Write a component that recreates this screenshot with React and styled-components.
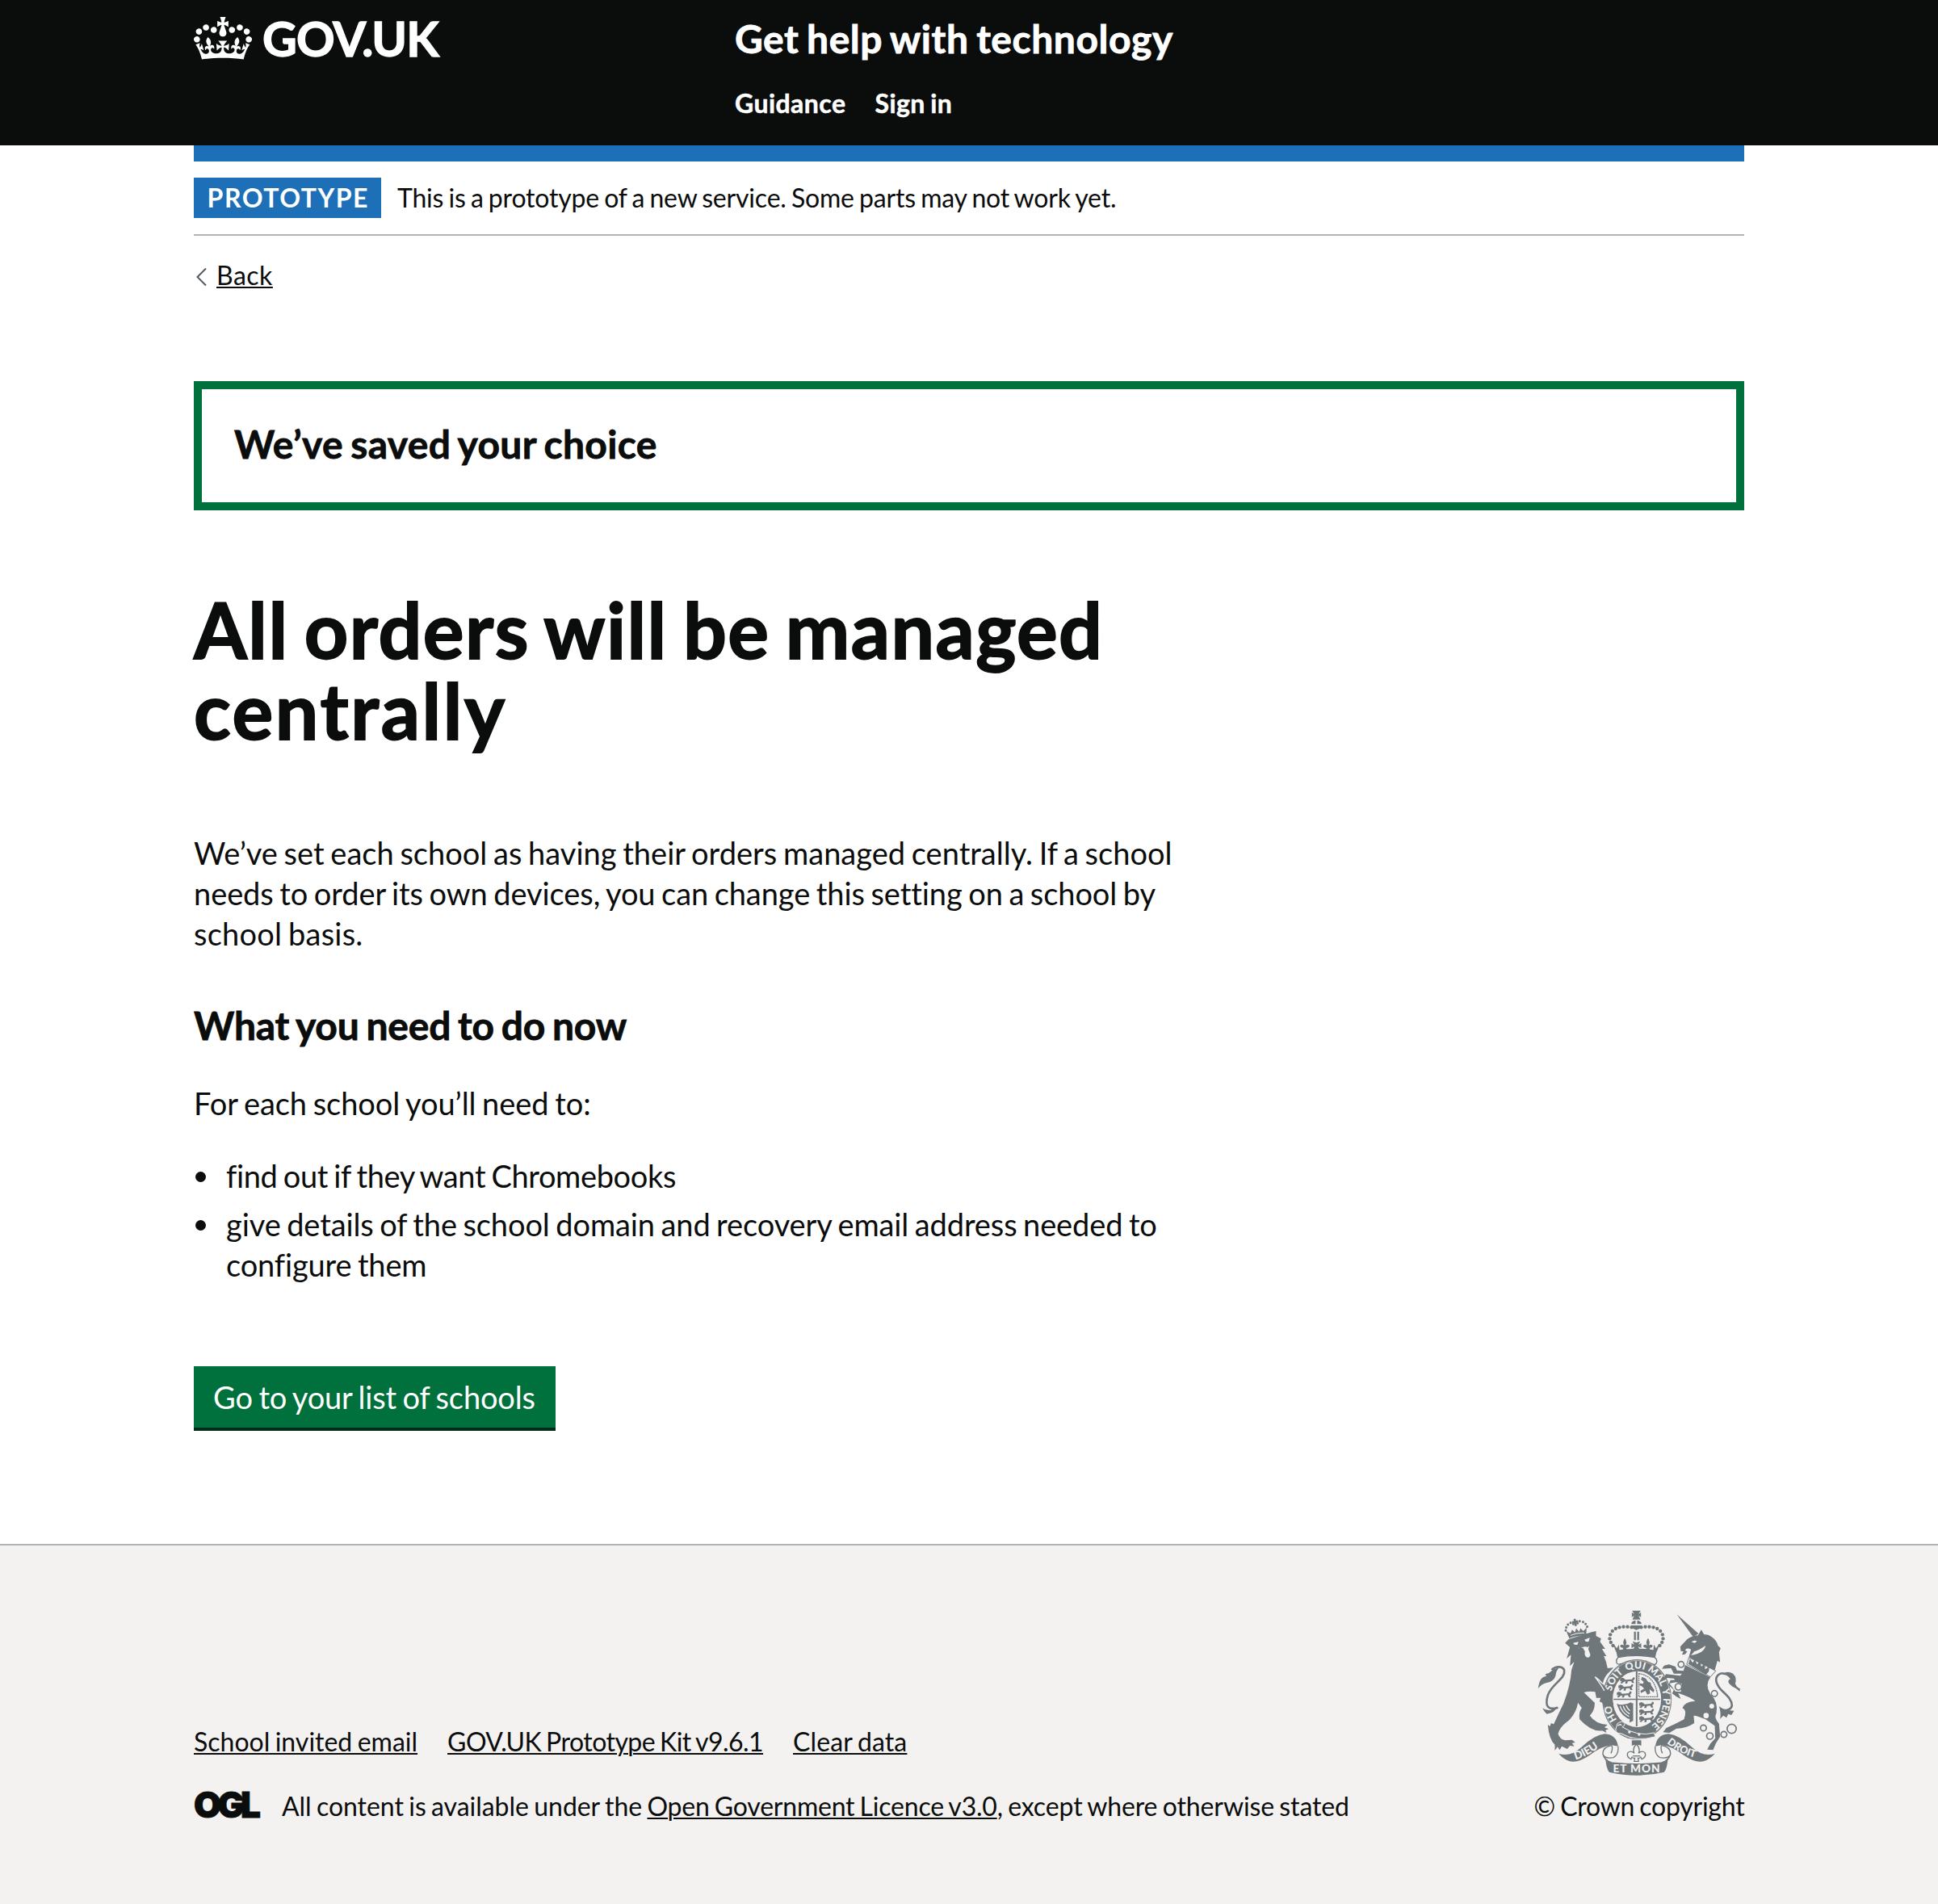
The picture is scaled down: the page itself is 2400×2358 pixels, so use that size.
import React from "react";
import styled, { createGlobalStyle } from "styled-components";

const INK = "#0b0c0c";
const GREEN = "#00703c";
const BLUE = "#1d70b8";
const RULE = "#b1b4b6";
const CREST = "#6f777b";
const PAPER = "#f3f2f1";

const GlobalStyle = createGlobalStyle`
  *, *::before, *::after { box-sizing: border-box; }
  body {
    margin: 0;
    background: #fff;
    color: ${INK};
    font-family: Lato, Roboto, "Liberation Sans", sans-serif;
    font-size: 38px;
    line-height: 50px;
  }
`;

const Page = styled.div`
  display: flex;
  flex-direction: column;
  min-height: 2358px;
`;

const Container = styled.div`
  width: 1920px;
  margin: 0 auto;
`;

/* Tracked run of text */
const Run = styled.span`
  letter-spacing: ${(p) => p.$track || 0}px;
  word-spacing: -0.055em;
  white-space: pre;
`;

const Line = styled(Run)`
  display: block;
`;

const Header = styled.header`
  height: 180px;
  background: ${INK};
  color: #fff;
`;

const HeaderInner = styled(Container)`
  display: flex;
  align-items: flex-start;
`;

const Brand = styled.a`
  display: flex;
  align-items: flex-start;
  width: 670px;
  padding-top: 17px;
`;

const CrownIcon = styled.svg`
  width: 72px;
  height: 53px;
  margin: 4px 13px 0 0;
  fill: #fff;
`;

const BrandText = styled.span`
  font-size: 59px;
  line-height: 61px;
  font-weight: 700;
  letter-spacing: -0.9px;
  -webkit-text-stroke: 1.4px currentColor;
`;

const HeaderContent = styled.div`
  display: flex;
  flex-direction: column;
  gap: 30px;
  padding-top: 18px;
`;

const ServiceName = styled.a`
  font-size: 48px;
  line-height: 60px;
  font-weight: 700;
  -webkit-text-stroke: 0.8px currentColor;
`;

const Nav = styled.nav`
  display: flex;
  gap: 36px;
  font-size: 32px;
  line-height: 40px;
  font-weight: 700;
  -webkit-text-stroke: 0.5px currentColor;
`;

const BlueBar = styled.div`
  height: 20px;
  background: ${BLUE};
`;

const PhaseBanner = styled.div`
  display: flex;
  align-items: baseline;
  gap: 20px;
  padding: 20px 0;
  border-bottom: 2px solid ${RULE};
  font-size: 32px;
  line-height: 40px;
`;

const Tag = styled.strong`
  width: 232px;
  height: 50px;
  background: ${BLUE};
  color: #fff;
  text-align: center;
  line-height: 49px;
  letter-spacing: 1.5px;
  text-indent: 1.5px;
`;

const BackLink = styled.a`
  display: flex;
  align-items: center;
  width: max-content;
  margin-top: 29px;
  font-size: 32px;
  line-height: 40px;
`;

const Chevron = styled.svg`
  width: 14px;
  height: 24px;
  margin: 3px 11px 0 3px;
  fill: none;
  stroke: #505a5f;
  stroke-width: 2;
`;

const Underlined = styled(Run)`
  text-decoration: underline;
  text-decoration-thickness: 2px;
  text-underline-offset: 2.4px;
`;

const Panel = styled.section`
  height: 160px;
  margin-top: 111px;
  padding: 38px 40px;
  border: 10px solid ${GREEN};
`;

const SubHeading = styled.h2`
  margin: 0;
  font-size: 48px;
  line-height: 60px;
  font-weight: 700;
  -webkit-text-stroke: 0.8px currentColor;
`;

const Title = styled.h1`
  margin: 97px 0 102px;
  font-size: 95px;
  line-height: 100px;
  font-weight: 700;
  -webkit-text-stroke: 1.8px currentColor;
`;

const Copy = styled.p`
  margin: 0 0 ${(p) => p.$after || 40}px;
`;

const Bullets = styled.ul`
  display: flex;
  flex-direction: column;
  gap: 10px;
  margin: 0 0 101px;
  padding: 0;
  list-style: none;
`;

const Bullet = styled.li`
  display: grid;
  grid-template-columns: 40px auto;
  align-items: start;
  &::before {
    content: "";
    width: 13px;
    height: 13px;
    margin: 20px 0 0 1.5px;
    border-radius: 50%;
    background: ${INK};
  }
`;

const Button = styled.button`
  display: block;
  width: 448px;
  height: 76px;
  padding: 0 1px 0 0;
  border: 0;
  background: ${GREEN};
  box-shadow: 0 4px 0 #002d18;
  color: #fff;
  font: inherit;
  line-height: 76px;
`;

const Footer = styled.footer`
  flex: 1;
  margin-top: 144px;
  padding-top: 80px;
  border-top: 2px solid ${RULE};
  background: ${PAPER};
  font-size: 32px;
  line-height: 40px;
`;

const FooterInner = styled(Container)`
  display: flex;
  justify-content: space-between;
  align-items: flex-end;
`;

const FooterMeta = styled.div`
  display: flex;
  flex-direction: column;
  gap: 40px;
`;

const FooterLinks = styled.div`
  display: flex;
  gap: 37px;
`;

const Licence = styled.div`
  display: flex;
  align-items: flex-start;
`;

const OglMark = styled.span`
  width: 109px;
  margin-top: -2px;
  font-family: Inter, "Noto Sans", sans-serif;
  font-size: 44px;
  line-height: 40px;
  font-weight: 900;
  letter-spacing: -4.6px;
  -webkit-text-stroke: 1px currentColor;
`;

const Copyright = styled.div`
  display: flex;
  flex-direction: column;
  align-items: center;
  gap: 18px;
  width: 260px;
`;

const CrestSvg = styled.svg`
  width: 252px;
  height: 205px;
  fill: ${CREST};
`;

function Crown() {
  return (
    <CrownIcon viewBox="0 0 132 97" aria-hidden="true">
      <path
        fillRule="evenodd"
        d="M25 30.2c3.5 1.5 7.7-.2 9.1-3.7 1.5-3.6-.2-7.8-3.9-9.2-3.6-1.4-7.6.3-9.1 3.9-1.4 3.5.3 7.5 3.9 9zM9 39.5c3.6 1.5 7.8-.2 9.2-3.7 1.5-3.6-.2-7.8-3.9-9.1-3.6-1.5-7.6.2-9.1 3.8-1.4 3.5.3 7.5 3.8 9zM4.4 57.2c3.5 1.5 7.7-.2 9.1-3.8 1.5-3.6-.2-7.7-3.9-9.1-3.5-1.5-7.6.3-9.1 3.8-1.4 3.5.3 7.6 3.9 9.1zm38.3-21.4c3.5 1.5 7.7-.2 9.1-3.8 1.5-3.6-.2-7.7-3.9-9.1-3.6-1.5-7.6.3-9.1 3.8-1.3 3.6.4 7.7 3.9 9.1zm64.4-5.6c-3.6 1.5-7.8-.2-9.1-3.7-1.5-3.6.2-7.8 3.8-9.2 3.6-1.4 7.7.3 9.2 3.9 1.3 3.5-.4 7.5-3.9 9zm15.9 9.3c-3.6 1.5-7.7-.2-9.1-3.7-1.5-3.6.2-7.8 3.7-9.1 3.6-1.5 7.7.2 9.2 3.8 1.5 3.5-.3 7.5-3.8 9zm4.7 17.7c-3.6 1.5-7.8-.2-9.2-3.8-1.5-3.6.2-7.7 3.9-9.1 3.6-1.5 7.7.3 9.2 3.8 1.3 3.5-.4 7.6-3.9 9.1zM89.3 35.8c-3.6 1.5-7.8-.2-9.2-3.8-1.4-3.6.2-7.7 3.9-9.1 3.6-1.5 7.7.3 9.2 3.8 1.4 3.6-.3 7.7-3.9 9.1zM69.7 17.7l8.9 4.7V9.3l-8.9 2.8c-.2-.3-.5-.6-.9-.9L72.4 0H59.6l3.5 11.2c-.3.3-.6.5-.9.9l-8.8-2.8v13.1l8.8-4.7c.3.3.6.7.9.9l-5 15.4v.1c-.2.8-.4 1.6-.4 2.4 0 4.1 3.1 7.5 7 8.1h.2c.3 0 .7.1 1 .1.4 0 .7 0 1-.1h.2c4-.6 7.1-4.1 7.1-8.1 0-.8-.1-1.7-.4-2.4V34l-5.1-15.4c.4-.2.7-.6 1-.9zM66 92.8c16.9 0 32.8 1.1 47.1 3.2 4-16.9 8.9-26.7 14-33.5l-9.6-3.4c1 4.9 1.1 7.2 0 10.2-1.5-1.4-3-4.3-4.2-8.7L108.6 76c2.8-2 5-3.2 7.5-3.3-4.4 9.4-10 11.9-13.6 11.2-4.3-.8-6.3-4.6-5.6-7.9 1-4.7 5.7-5.9 8-.5 4.3-8.7-3-11.4-7.6-8.8 7.1-7.2 7.9-13.5 2.1-21.1-8 6.1-8.1 12.3-4.5 20.8-4.7-5.4-12.1-2.5-9.5 6.2 3.4-5.2 7.9-2 7.2 3.1-.6 4.3-6.4 7.8-13.5 7.2-10.3-.9-10.9-8-11.2-13.8 2.5-.5 7.1 1.8 11 7.3L80.2 60c-4.1 4.4-8 5.3-12.3 5.4 1.4-4.4 8-11.6 8-11.6H55.5s6.4 7.2 7.9 11.6c-4.2-.1-8-1-12.3-5.4l1.4 16.4c3.9-5.5 8.5-7.7 10.9-7.3-.3 5.8-.9 12.8-11.1 13.8-7.2.6-12.9-2.9-13.5-7.2-.7-5 3.8-8.3 7.1-3.1 2.7-8.7-4.6-11.6-9.4-6.2 3.7-8.5 3.6-14.7-4.6-20.8-5.8 7.6-5 13.9 2.2 21.1-4.7-2.6-11.9.1-7.7 8.8 2.3-5.5 7.1-4.2 8.1.5.7 3.3-1.3 7.1-5.7 7.9-3.5.7-9-1.8-13.5-11.2 2.5.1 4.7 1.3 7.5 3.3l-4.7-15.4c-1.2 4.4-2.7 7.2-4.3 8.7-1.1-3-.9-5.3 0-10.2l-9.5 3.4c5 6.9 9.9 16.7 14 33.5 14.8-2.1 30.8-3.2 47.7-3.2z"
      />
    </CrownIcon>
  );
}

const BEADS = [
  [419, 104], [404, 102], [389, 102], [374, 104], [360, 109],
  [348, 118], [340, 131], [338, 146], [342, 160], [350, 172],
];
const MOTTO = [
  ["HO", 13], ["SOIT", 29.5], ["QUI", 44], ["MAL", 55.8], ["Y", 69.3], ["PENSE", 74.3],
];
const CHAIN = [
  [603, 242, 11], [593, 325, 12], [727, 350, 11], [686, 478, 11],
  [710, 508, 12], [762, 502, 11], [791, 481, 17],
];

function Passant({ x, y }) {
  return (
    <path
      transform={`translate(${x} ${y})`}
      d="M0 4l8-4 8 3 4 5 24-2c6-4 2-8 8-7 6 2 2 9-3 12l4 9h-8l-4-7-12 1-2 8h-8l2-8-7 2-6 6-7-2 6-7-6 1z"
    />
  );
}

function Crest() {
  return (
    <CrestSvg viewBox="70 40 755 615" aria-hidden="true">
      <defs>
        <path id="garter" d="M439 487A98 115 0 0 1 439 257A98 115 0 0 1 439 487" />
        <path id="dieu" d="M211 596Q262 582 320 532" />
        <path id="droit" d="M550 534Q608 582 680 594" />
      </defs>

      {/* imperial crown */}
      <path d="M421 42h32l-8 12 9-5v17l-9-5 7 14h-30l7-14-9 5V49l9 5z" />
      <path d="M418 92a19 15 0 0 1 16-14v14zM440 78a19 15 0 0 1 16 14h-16zM416 97h42l-4 10-17 7-17-7z" />
      {BEADS.map(([x, y]) => (
        <g key={x}>
          <circle cx={x} cy={y} r="6.5" />
          <circle cx={874 - x} cy={y} r="6.5" />
        </g>
      ))}
      <path d="M428 120h7v32h-7zM440 120h7v32h-7z" />
      <path d="M423 156l14 5 14-5-6 13 10-6v18l-11-6 5 13h-24l5-13-11 6v-18l10 6z" />
      <path d="M394 144q10 14 3 27 10-6 15 2-2 9-12 7l2 14h-16l2-14q-10 2-12-7 5-8 15-2-7-13 3-27z" />
      <path d="M480 144q10 14 3 27 10-6 15 2-2 9-12 7l2 14h-16l2-14q-10 2-12-7 5-8 15-2-7-13 3-27z" />
      <path d="M352 166l12 16 8-14 2 20q63-10 126 0l2-20 8 14 12-16q-4 20-11 32l-4 18q-70-16-140 0l-4-18q-7-12-11-32z" />
      <path d="M369 216q68-14 136 0 12 8 6 22-6 8-16 2-56-18-116 0-10 4-15-3-4-13 5-21z" fill={PAPER} stroke={CREST} strokeWidth="4" />

      {/* garter and shield */}
      <ellipse cx="439" cy="372" rx="129" ry="149" />
      <ellipse cx="439" cy="372" rx="125" ry="145" fill="none" stroke={PAPER} strokeWidth="1.5" />
      <ellipse cx="439" cy="371" rx="90" ry="104" fill={PAPER} />
      <g fill={PAPER} fontFamily="Lato, sans-serif" fontWeight="900" fontSize="37">
        {MOTTO.map(([word, at]) => (
          <text key={word}>
            <textPath href="#garter" startOffset={`${at}%`}>{word}</textPath>
          </text>
        ))}
      </g>
      <path d="M352 369h174v5H352zM435 268h6v204h-6z" />
      <Passant x={376} y={291} />
      <Passant x={370} y={317} />
      <Passant x={364} y={343} />
      <Passant x={447} y={382} />
      <Passant x={447} y={408} />
      <Passant x={447} y={434} />
      <path d="M446 276q62 8 70 86h-70z" fill="none" stroke={CREST} strokeWidth="4" strokeDasharray="6 2" />
      <path d="M458 288l14 6 8 12 10 4 2 10 12 18-4 8-14-12 2 16-10 4-8-14-16 8-2-8 14-8-10-10-8-2 2-8 12 2 2-8-10-8z" />
      <path d="M364 388q24 10 54-6l2 66q-40-10-54-54zM418 386h7v66l-14 6z" />
      <path d="M376 396q8 26 34 40M388 396q4 18 24 30M399 394q4 12 14 20" fill="none" stroke={PAPER} strokeWidth="4" />
      <path d="M366 462q20-14 28 0 0 10-10 12 60 38 118 22l6 14q-70 22-128-12-18 2-20-14z" stroke={PAPER} strokeWidth="3" />
      <path d="M368 470q8-8 14-2" fill="none" stroke={PAPER} strokeWidth="4" />
      <circle cx="411" cy="493" r="5" fill={PAPER} />
      <circle cx="447" cy="502" r="5" fill={PAPER} />

      {/* lion */}
      <path d="M122 262C140 246 164 248 169 264C174 296 124 312 108 356C96 396 108 414 146 402" fill="none" stroke={CREST} strokeWidth="8" />
      <path d="M72 332C76 300 84 288 104 285Q90 278 112 274Q130 258 150 254Q138 266 137 284Q130 306 104 310Q84 314 72 332zM88 404q12 10 30 8l24-14q-6 24-38 28-10-8-16-22z" />
      <path d="M172 162L186 148L270 122L287 118L287 136L306 146L302 158L321 184L309 184L326 212L316 210Q326 232 330 256L352 254L336 270Q316 288 312 314Q340 346 352 390L346 400L338 388L334 402L326 390L318 400L310 384L300 380L304 366L288 366L284 344Q262 340 242 346L282 384Q284 410 264 432Q284 462 330 466L318 476L334 482L322 486L326 496L310 488Q270 494 226 446Q222 420 234 404L220 384Q214 420 188 448Q150 476 146 500Q152 520 172 524L198 522L210 532L198 534L206 546L190 544L180 556L160 546L152 560L144 548L134 562L134 540Q112 520 108 466L116 472L120 460L130 464Q150 420 166 388Q192 320 196 262L206 232L190 248L194 206L178 220L190 178z" />
      <path d="M283 288Q306 318 318 340M312 314Q300 300 283 288" fill="none" stroke={PAPER} strokeWidth="4" />
      <path d="M202 162l20-4-4 10q-12 4-16-6zM244 150l20-8-4 14q-10 6-16-6zM220 182l16-10 26 2-4 10 8 22q-2 12-12 10-12-6-8-22l-8-14z" fill={PAPER} />
      <path d="M222 182q4-14 38-12l-2 8q-16-6-28 4z" />
      <g transform="rotate(-10 214 110)">
        <path d="M176 112l14 10 8-12 8 12 8-14 8 14 8-12 8 12 14-10-6 28q-32-6-64 0z" />
        <circle cx="178" cy="98" r="4.5" /><circle cx="186" cy="89" r="4.5" /><circle cx="197" cy="84" r="4.5" />
        <circle cx="206" cy="90" r="4.5" /><circle cx="222" cy="90" r="4.5" /><circle cx="231" cy="84" r="4.5" />
        <circle cx="243" cy="89" r="4.5" /><circle cx="251" cy="98" r="4.5" /><circle cx="255" cy="109" r="4.5" />
        <circle cx="174" cy="109" r="4.5" />
        <path d="M210 72h8v7h7v8h-7v12h-8V87h-7v-8h7z" />
        <path d="M188 130q26-6 52 0" fill="none" stroke={PAPER} strokeWidth="3" />
      </g>

      {/* unicorn */}
      <path d="M764 276C744 270 730 288 734 306C742 344 792 356 792 396Q786 412 766 412" fill="none" stroke={CREST} strokeWidth="8" />
      <path d="M758 276Q776 264 796 276Q812 292 804 312Q808 326 822 332L821 342Q806 328 794 324Q768 306 786 296Q776 280 758 280zM744 398q22 16 56 16l-10 16-12-4-6 14-12-8-12 12q4-24-4-46z" />
      <path d="M587 56L668 128L648 140z" />
      <path d="M602 192L600 176L626 148Q642 136 666 134L678 113L688 130L704 132Q734 146 740 172L750 182L744 196L748 234L738 228L728 264L706 256L632 214L640 186Q622 178 618 190L626 194L618 204L606 206L612 194z" />
      <path d="M642 158q10-8 20-2l-8 6q-6 0-12-4zM640 208Q690 200 694 172Q668 190 652 194z" fill={PAPER} />
      <path d="M632 216L732 266L712 288L624 242z" fill={PAPER} stroke={CREST} strokeWidth="3" />
      <path d="M630 240l6-20 10 16 8-14 8 20 12-12 4 20 14-12 0 22 16-10-2 18-10 12z" />
      <path d="M618 244L712 290Q690 318 712 352Q742 380 734 424Q724 440 744 462L748 510L732 536L722 560L700 558L712 536L730 516L728 470L694 446Q664 432 650 432L652 460Q622 480 586 480L560 496L536 494L548 478L582 462L614 446Q626 410 608 404Q616 380 656 378Q640 364 592 348L602 370L586 362L570 350L576 336L556 318L564 300L580 300L576 294L552 292L538 302L546 278L600 284L606 276L576 276L566 256L532 258L540 246L558 242L582 250L588 264L612 266z" />
      <path d="M560 312l24-4 22 6-4 30-20-2z" fill={PAPER} />
      {CHAIN.map(([x, y, r]) => (
        <circle key={x} cx={x} cy={y} r={r} fill="none" stroke={CREST} strokeWidth="5" />
      ))}
      <circle cx="717" cy="397" r="9" fill={PAPER} />
      <circle cx="696" cy="432" r="10" fill={PAPER} />
      <circle cx="727" cy="350" r="8" fill={PAPER} />

      {/* motto scroll */}
      <path d="M148 573Q190 588 232 550Q280 504 320 500Q362 502 369 546L346 542Q310 544 262 580Q222 608 190 602Q166 594 148 573z" />
      <path d="M729 573Q686 588 644 550Q596 504 556 500Q514 502 507 546L530 542Q566 544 614 580Q654 608 686 602Q710 594 729 573z" />
      <path d="M346 543Q312 548 312 574Q318 594 352 588Q372 576 369 546M530 543Q564 548 564 574Q558 594 524 588Q504 576 507 546M312 574Q318 600 344 606M564 574Q558 600 532 606M346 543Q350 560 342 572M530 543Q526 560 534 572" fill="none" stroke={CREST} strokeWidth="4" />
      <path d="M322 588Q330 606 360 606Q437 614 516 606Q546 606 554 588Q552 628 540 642Q437 666 336 642Q324 626 322 588z" />
      <g fill={PAPER} fontFamily="Lato, sans-serif" fontWeight="900" fontSize="41">
        <text><textPath href="#dieu">DIEU</textPath></text>
        <text fontSize="38"><textPath href="#droit">DROIT</textPath></text>
        <text x="350" y="644" textLength="174">ET MON</text>
      </g>
      <path d="M420 524h35v20q-18-8-35 0z" />
      <path d="M437 538q16 16 8 34 12-12 24-2 6 16-12 24l-4-8q-4 6-10 4l2 12h-16l2-12q-6 2-10-4l-4 8q-18-8-12-24 12-10 24 2-8-18 8-34z" fill={PAPER} stroke={CREST} strokeWidth="4" />
      <path d="M424 582h27" stroke={CREST} strokeWidth="4" />
    </CrestSvg>
  );
}

export default function App() {
  return (
    <Page>
      <GlobalStyle />
      <Header>
        <HeaderInner>
          <Brand>
            <Crown />
            <BrandText>GOV.UK</BrandText>
          </Brand>
          <HeaderContent>
            <ServiceName>
              <Run $track={0.55}>Get help with technology</Run>
            </ServiceName>
            <Nav>
              <Run $track={0.45}>Guidance</Run>
              <Run $track={0.45}>Sign in</Run>
            </Nav>
          </HeaderContent>
        </HeaderInner>
      </Header>

      <Container as="main">
        <BlueBar />
        <PhaseBanner>
          <Tag>PROTOTYPE</Tag>
          <Run $track={-0.19}>This is a prototype of a new service. Some parts may not work yet.</Run>
        </PhaseBanner>
        <BackLink>
          <Chevron viewBox="0 0 14 24"><path d="M12 1.5L1.5 12L12 22.5" /></Chevron>
          <Underlined $track={0.5}>Back</Underlined>
        </BackLink>

        <Panel>
          <SubHeading>
            <Line $track={0.35}>We’ve saved your choice</Line>
          </SubHeading>
        </Panel>

        <Title>
          <Line $track={1.45}>All orders will be managed</Line>
          <Line $track={2.6}>centrally</Line>
        </Title>

        <Copy $after={59}>
          <Line $track={0.02}>We’ve set each school as having their orders managed centrally. If a school</Line>
          <Line $track={-0.07}>needs to order its own devices, you can change this setting on a school by</Line>
          <Line $track={0.22}>school basis.</Line>
        </Copy>
        <SubHeading>
          <Line $track={-0.19}>What you need to do now</Line>
        </SubHeading>
        <Copy $after={41} />
        <Copy>
          <Line $track={-0.04}>For each school you’ll need to:</Line>
        </Copy>
        <Bullets>
          <Bullet>
            <Line $track={-0.37}>find out if they want Chromebooks</Line>
          </Bullet>
          <Bullet>
            <div>
              <Line $track={-0.1}>give details of the school domain and recovery email address needed to</Line>
              <Line $track={-0.15}>configure them</Line>
            </div>
          </Bullet>
        </Bullets>
        <Button>
          <Run $track={-0.14}>Go to your list of schools</Run>
        </Button>
      </Container>

      <Footer>
        <FooterInner>
          <FooterMeta>
            <FooterLinks>
              <Underlined $track={0}>School invited email</Underlined>
              <Underlined $track={-0.53}>GOV.UK Prototype Kit v9.6.1</Underlined>
              <Underlined $track={0.12}>Clear data</Underlined>
            </FooterLinks>
            <Licence>
              <OglMark>OGL</OglMark>
              <span>
                <Run $track={-0.04}>{"All content is available under the "}</Run>
                <Underlined $track={-0.21}>Open Government Licence v3.0</Underlined>
                <Run $track={-0.11}>, except where otherwise stated</Run>
              </span>
            </Licence>
          </FooterMeta>
          <Copyright>
            <Crest />
            <Run $track={-0.24}>© Crown copyright</Run>
          </Copyright>
        </FooterInner>
      </Footer>
    </Page>
  );
}
